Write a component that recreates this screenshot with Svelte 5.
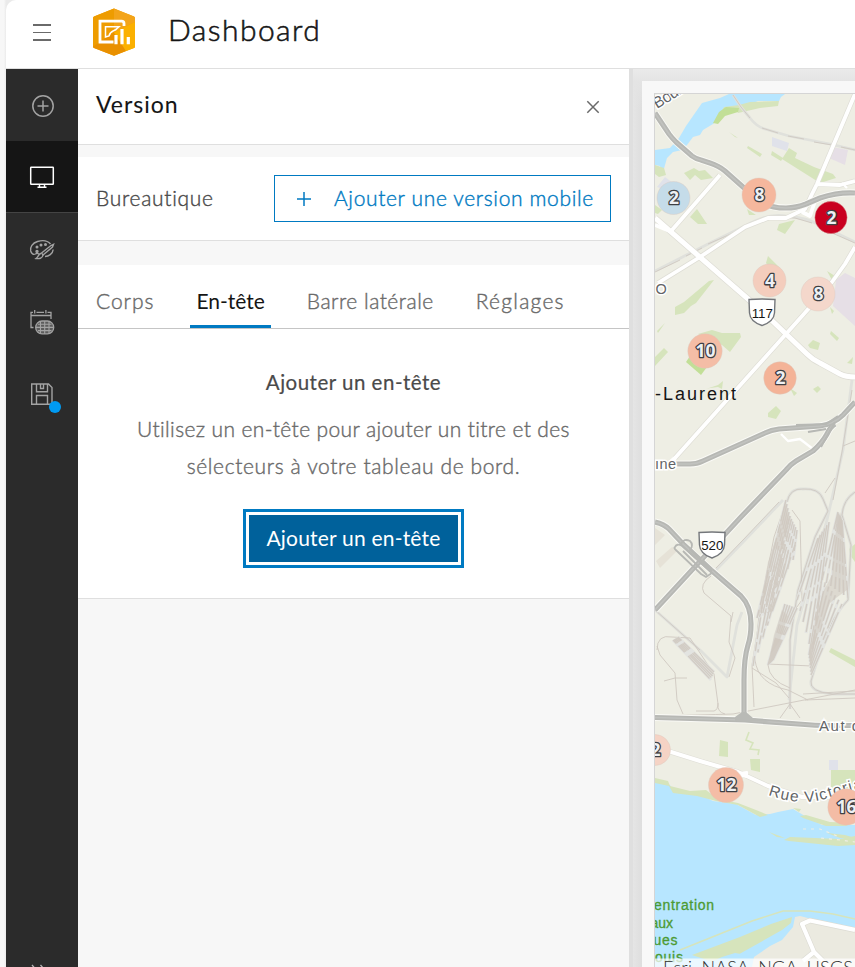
<script>
  const tabs = [
    { label: 'Corps', active: false, spacing: 0.95 },
    { label: 'En-tête', active: true, spacing: 0 },
    { label: 'Barre latérale', active: false, spacing: 0.5 },
    { label: 'Réglages', active: false, spacing: 1.25 }
  ];

  const clusters = [
    { x: 673.5, y: 198, r: 16, n: '2', fill: '#c5dce9' },
    { x: 759, y: 195, r: 16.5, n: '8', fill: '#f5b79d' },
    { x: 831, y: 217.5, r: 15.7, n: '2', fill: '#c9001f' },
    { x: 769.5, y: 280.5, r: 16, n: '4', fill: '#f4cdbd' },
    { x: 818, y: 294, r: 16.5, n: '8', fill: '#f4d7cb' },
    { x: 705, y: 351, r: 16.7, n: '10', fill: '#f4bda6' },
    { x: 780, y: 378, r: 15.8, n: '2', fill: '#f4b397' },
    { x: 655, y: 750, r: 15, n: '2', fill: '#f5d3c5' },
    { x: 726, y: 785, r: 17, n: '12', fill: '#f4bda6' },
    { x: 846, y: 807, r: 17.7, n: '16', fill: '#f4bca5' }
  ];

  // Fan of parallel sidings between two end lines of a rail yard
  function fan(ax, ay, bx, by, cx, cy, dx, dy, n) {
    let d = '';
    for (let i = 0; i <= n; i++) {
      const t = i / n;
      const x1 = ax + (bx - ax) * t;
      const y1 = ay + (by - ay) * t;
      const x2 = cx + (dx - cx) * t;
      const y2 = cy + (dy - cy) * t;
      d += `M${x1.toFixed(1)} ${y1.toFixed(1)}L${x2.toFixed(1)} ${y2.toFixed(1)}`;
    }
    return d;
  }

  const yards = [
    fan(786, 500, 791, 520, 757, 618, 770, 612, 5),
    fan(790, 516, 797, 530, 766, 605, 793, 560, 5),
    fan(768, 570, 795, 545, 753, 666, 772, 612, 4),
    fan(818, 538, 829, 522, 797, 600, 812, 655, 5),
    fan(838, 512, 842, 520, 822, 580, 848, 598, 6),
    fan(822, 578, 842, 604, 809, 655, 811, 675, 6),
    fan(785, 604, 797, 608, 768, 665, 773, 660, 5),
    fan(673, 640, 678, 637, 711, 680, 714, 672, 4)
  ];

  const motorways = [
    'M655 113L669 134Q672 138 676 142L692 156Q696 159 701 160L710 163Q719 166 725 171L743 187L757 199Q768 208 786 208Q796 208 806 204L820 198Q838 192 855 193',
    'M675 464H690Q697 464 703 461L765 433Q771 430 779 429L820 426Q834 424 843 415L855 402',
    'M835 424Q830 427 827 434Q822 443 813 451L796 461Q791 464 786 470L740 518L655 610',
    'M655 522Q664 524 669 529L684 545L711 570L741 596Q751 606 751 624Q751 636 748 645Q744 658 744 680V718',
    'M655 717.500L745 720L805 724.500Q815 725.500 825 725.500H855'
  ];
</script>

<div class="page">
  <header class="topbar">
    <button class="burger" aria-label="Menu">
      <span></span><span></span><span></span>
    </button>
    <svg class="logo" width="44" height="48" viewBox="0 0 44 48">
      <path d="M22 0.5L42 8.4Q43 9 43 10V38.5Q43 39.5 42 40L22 47.8L2 40Q1 39.5 1 38.5V10Q1 9 2 8.4Z" fill="#f3a000" />
      <path d="M22 0.5L2 8.4Q1 9 1 10V38.5L22 24.5Z" fill="#ee9c00" />
      <path d="M22 0.5L42 8.4Q43 9 43 10V14L22 24Z" fill="#f3a41a" />
      <path d="M1 38.5Q1 39.5 2 40L22 47.8L34 43L22 24.5Z" fill="#e99000" />
      <path d="M43 14V38.5Q43 39.5 42 40L34 43L22 24.5Z" fill="#fbb000" />
      <path d="M21.500 34H8V13.200H29.500Q32 13.200 32 15.500V18" fill="none" stroke="#fff" stroke-width="2.800" />
      <path d="M13.500 29V18.700H27L25 20.500Q24 22 21.500 22.700Q18 24 17 28L13.500 29Z" fill="none" stroke="#fff" stroke-width="1.500" />
      <path d="M24 27V36.300M30 21V36.300M36.300 29V36.300" stroke="#fff" stroke-width="3.200" />
    </svg>
    <h1>Dashboard</h1>
  </header>

  <div class="body">
    <nav class="rail">
      <button aria-label="Ajouter">
        <svg class="add" width="24" height="24" viewBox="0 0 24 24" fill="none" stroke="#a3a3a3" stroke-width="1.500">
          <circle cx="12" cy="12" r="10.200" /><path d="M12 6.500V17.500M6.500 12H17.500" />
        </svg>
      </button>
      <button class="on" aria-label="Version">
        <svg width="26" height="24" viewBox="0 0 26 24" fill="none" stroke="#fff">
          <rect x="1.700" y="1.200" width="22.600" height="17" rx=".5" stroke-width="1.500" />
          <path d="M10.500 18.500V21M15.500 18.500V21M8.500 21.300H17.500" stroke-width="1.400" />
        </svg>
      </button>
      <button aria-label="Thème">
        <svg width="26" height="24" viewBox="0 0 26 24" fill="none" stroke="#a3a3a3" stroke-width="1.400">
          <path d="M21.500 6C18.500 2.500 13 2.200 8.500 3.500C3.500 5 .8 9 1.700 13C2.500 15.800 4.500 17 6.300 16C8 15 9.200 15.200 10 16.500" />
          <circle cx="8" cy="13.500" r="1" fill="#a3a3a3" /><circle cx="8" cy="9" r=".8" /><circle cx="12" cy="7" r=".8" /><circle cx="16.500" cy="6.500" r=".8" />
          <path d="M12.500 15L22 7.500L24.500 6.300L23.500 9L14 17Z" />
          <path d="M12 15.500C9.500 15.500 9.800 18.500 7 20.500C10 21 13.500 20.500 14 17M16 18.500C19.500 18.200 23.800 16 24.200 11.500" />
        </svg>
      </button>
      <button aria-label="Fuseau horaire">
        <svg width="26" height="26" viewBox="0 0 26 26" fill="none" stroke="#a3a3a3" stroke-width="1.300">
          <path d="M4.500 18.500H2V3.300H4M7.500 3.300H15M18.500 3.300H22V10M2 6.500H22M5.700 1V4.500M16.900 1V4.500" />
          <rect x="6.700" y="12" width="18" height="12.800" rx="6.300" fill="#5c5c5c" />
          <path d="M7 18.400H24.500M9 15.200H22.500M9 21.600H22.500M15.700 12V25M11.500 12.500V24.500M20 12.500V24.500" stroke-width="1.100" />
        </svg>
      </button>
      <button class="save" aria-label="Enregistrer">
        <svg width="24" height="24" viewBox="0 0 24 24" fill="none" stroke="#a3a3a3" stroke-width="1.400">
          <path d="M1.700 2H18.500L22 5.500V22.300H1.700ZM6.500 2V9.700H17.500V2M10.500 2V6.500H13.500V2M6.500 22V13.500H17.500V22" />
        </svg>
        <i></i>
      </button>
      <div class="expand">
        <svg width="18" height="16" viewBox="0 0 18 16" fill="none" stroke="#b5b5b5" stroke-width="1.300">
          <path d="M2 1L8 8L2 15M10.500 1L16.500 8L10.500 15" />
        </svg>
      </div>
    </nav>

    <section class="panel">
      <div class="title-row">
        <h2>Version</h2>
        <svg width="14" height="14" viewBox="0 0 14 14" stroke="#6a6a6a" stroke-width="1.500"><path d="M1.300 1.300L12.700 12.700M12.700 1.300L1.300 12.700" /></svg>
      </div>
      <div class="version-row">
        <span class="lift">Bureautique</span>
        <button class="outline">
          <svg width="14" height="14" viewBox="0 0 14 14" stroke="#007ac2" stroke-width="1.500"><path d="M7 0V14M0 7H14" /></svg>
          <span class="lift">Ajouter une version mobile</span>
        </button>
      </div>
      <div class="card">
        <div class="tabs">
          {#each tabs as tab}
            <div class="tab" class:active={tab.active} style:letter-spacing="{tab.spacing}px">{tab.label}</div>
          {/each}
        </div>
        <div class="empty">
          <h3>Ajouter un en-tête</h3>
          <p>Utilisez un en-tête pour ajouter un titre et des<br /><span class="second">sélecteurs à votre tableau de bord.</span></p>
          <button class="primary">Ajouter un en-tête</button>
        </div>
      </div>
    </section>

    <main class="stage">
      <div class="sheet">
        <svg class="map" width="200" height="873" viewBox="655 94 200 873">
          <rect x="655" y="94" width="200" height="873" fill="#eeeee4" />
          <!-- northern river -->
          <path d="M729 94H785L781 97L779 101L758 101L748 105L738 108L728 112L719 118L713 124L703 130L700 135L693 137L687 145L682 150L673 152L667 158L665 165L662 176L660 166L655 165V150L670 148L679 138L686 126L702 103L720 98Z" fill="#b7e6ff" />
          <path d="M735 108L724 114L719 119L713 124L719 116L724 107L739 105L750 102L779 101L778 106L760 108L738 113Z" fill="#d6e4bc" />
          <path d="M719 112L726 107L739 108L738 112L725 116L718 124L713 123Z" fill="#c2df97" />
          <g fill="#d6e4bc">
            <path d="M729 132L738 138L735 137ZM748 146L762 154L760 157L747 148ZM772 151L783 158L781 161L771 155ZM789 148L797 153L795 158L814 167L833 174L836 178L820 183L782 159Z" />
            <path d="M684 173L694 168L699 171L705 170L713 178L701 180L695 175L690 180ZM697 209L707 224L698 224L690 217ZM747 209L756 215L749 215ZM779 224L795 220L785 234L777 230Z" />
            <path d="M655 165L664 168L666 175L659 177L655 174ZM655 205L662 210L658 214L655 213ZM768 256L780 268L776 276L766 263ZM709 281L714 280L696 303L691 306L684 313L675 315L675 307L684 302ZM657 331L673 315L665 323L658 333ZM655 357L664 348L668 352L655 366Z" />
            <path d="M698 334L712 330L722 333H740L741 337L730 352L722 345ZM706 389L718 385L723 381L722 389L718 387L710 388ZM768 413L776 406L781 411L776 419L768 417ZM808 345L813 340L820 343L818 350L810 348ZM831 331L839 338L837 341L830 334ZM813 389L818 386L821 389L817 393ZM847 363L853 357L852 364ZM827 271L835 276L832 280ZM790 388L797 393L794 396ZM830 307L834 311L832 314Z" />
            <path d="M720 740L728 742L728 757L719 756ZM750 759H760V772L751 770ZM831 770H855V788H831ZM831 648L855 660V667L829 652ZM849 549L855 544V562L850 555Z" />
          </g>
          <path d="M686 362L692 353L707 367L701 375Z" fill="#c2df97" />
          <g fill="#e0e2ea"><path d="M772 137L789 143L787 151L772 146ZM657 187L665 177L673 183L666 190ZM829 760H838V770H829Z" /></g>
          <path d="M832 147L848 150L845 165L829 158ZM836 280L845 273L855 278V326L833 306Z" fill="#e6dfe6" />
          <path d="M655 545L665 535L655 528ZM656 561L672 547L678 550L660 568Z" fill="#e6e2d7" />

          <!-- southern river -->
          <path d="M655 782L670 785L673 791L697 793L713 801L736 804L756 815L770 814L778 812L793 809L805 816L822 825H855V967H655Z" fill="#b7e6ff" />
          <path d="M655 778L668 781L670 786L690 791L706 790L718 799L738 803L756 810L768 815L760 817L738 805L716 801L697 796L673 793L669 786L655 783ZM800 816L806 815L830 822L855 823L845 826L826 826L803 818ZM793 808L801 809L799 812ZM784 840L790 837L840 839L855 836V845L838 846L789 841ZM769 832L785 838L777 837ZM827 833L845 835L855 838L840 838Z" fill="#d6e4bc" />
          <path d="M803 829L820 829L837 836M821 838L840 840L855 842" fill="none" stroke="#eeeee4" stroke-width="1.200" stroke-dasharray="3 5" />
          <path d="M795 917L800 916L855 930V967H752L754 957L770 946L782 940L793 927Z" fill="#ebeae0" />
          <path d="M692 955L740 937L771 924L792 917L791 923L782 930L734 957L731 960L713 962Z" fill="#d6e4bc" />
          <path d="M680 950L752 921L783 911L810 911L833 914L855 919" fill="none" stroke="#d6e4bc" stroke-width="1.600" />
          <path d="M701 967L722 957L735 953L747 955L744 967Z" fill="#b7e6ff" />
          <path d="M855 930L810 920.500L802 924L814 952L803 961M814 952L829 967" fill="none" stroke="#dddcd4" stroke-width="5.500" stroke-linejoin="round" />
          <path d="M855 930L810 920.500L802 924L814 952L803 961M814 952L829 967" fill="none" stroke="#fff" stroke-width="4.200" stroke-linejoin="round" />
          <path d="M749 732L746 740L753 743L750 749L759 750L758 755" fill="none" stroke="#d6e4bc" stroke-width="1.600" />

          <!-- rail lines -->
          <g fill="none" stroke="#e0e1dc" stroke-width="2.800" stroke-linejoin="round">
            <path d="M733 95L741 107L750 118Q757 127 765 129L789 136L830 144L855 150M655 271L712 242L745 226Q768 213 785 216Q805 217 822 226L855 242M852 380L843 450L827 520L797 625L789 700" />
            <path d="M716 570L745 540L783 500M655 610L700 650L727 677L737 625L742 612" />
            <path d="M787 502Q790 488 803 489Q819 488 823 499L828 511L815 537L798 590L790 640V709M855 492Q843 500 842 515L851 545L848 600Q833 615 822 645L811 681Q809 692 833 694H855" />
          </g>
          <g fill="none" stroke="#cfc8c1" stroke-width=".9">
            <path d="M733 95L741 107L750 118M762 128L778 133M788 136L804 139M814 142L832 145M841 147L855 150M655 272L680 260M686 256L702 248M708 244L733 233M738 230L758 222M769 217L795 218L812 223M823 229L855 243" />
            <path d="M787 502Q790 488 803 489Q819 488 823 499L828 511L815 537L798 590L790 640V709M825 493L835 478M855 492Q843 500 842 515L851 545L848 600Q833 615 822 645L811 681Q809 692 833 694H855M785 505L774 537L759 614L755 660Q758 684 788 690L808 700M752 668L776 683L789 698M792 510L800 521L802 600Q785 620 768 665Q769 680 790 688M760 615L752 665L754 707M767 664L812 666" />
            <path d="M655 610L700 650M657 650Q657 634 672 637L690 638L714 674L718 704Q717 712 725 714M657 646L660 655L675 673L677 700L683 714M664 681L675 678L687 678M716 568L743 540L779 502M711 576Q699 584 704 593L731 616L729 642L735 658L729 677M731 622L733 612" />
            <path d="M852 390L842 452L833 500M843 446L855 441M655 716Q700 715 733 714L855 690M805 700L855 698M803 694L855 691M696 711H714Q718 710 718 703M790 704L780 718M790 704L800 718" />
          </g>
          {#each yards as d}
            <path {d} fill="none" stroke="#e3e4e1" stroke-width="3" />
          {/each}
          {#each yards as d, i}
            <path {d} fill="none" stroke="#d2ccc4" stroke-width="1.400" stroke-dasharray="22 3 9 5 31 4" stroke-dashoffset={i * 13} />
          {/each}
          <path d="M785 502L789 520L781 552L775 548L762 610L758 616L768 562L777 535ZM841 512L843 538L847 590L836 598L830 603L812 650L815 620L824 590L832 575L834 540ZM782 610L788 616L780 640L770 655L774 635Z" fill="#cfc8bf" opacity=".55" />

          <!-- local streets -->
          <g fill="none" stroke="#dfded6" stroke-linejoin="round">
            <path d="M655 218L701 258L763 312L807 354Q813 360 820 363L840 374Q846 377 855 377" stroke-width="6.500" />
            <path d="M672 230L720 175M658 283L700 257L745 227L768 218H786L805 209L812 194L817 184L855 94M817 184L840 185L855 181M855 247L845 264L832 282L803 315L675 458M655 747L700 761L738 772L768 786L802 797L855 797" stroke-width="5.200" />
          </g>
          <g fill="none" stroke="#fff" stroke-linejoin="round">
            <path d="M655 218L701 258L763 312L807 354Q813 360 820 363L840 374Q846 377 855 377" stroke-width="5" />
            <path d="M672 230L720 175M658 283L700 257L745 227L768 218H786L805 209L812 194L817 184L855 94M817 184L840 185L855 181M655 225L672 232M802 212L810 216L815 201M855 247L845 264L832 282L803 315L675 458L668 464" stroke-width="3.800" />
            <path d="M842 183L847 188M781 434L788 441L800 439L813 449" stroke-width="2.300" />
            <path d="M655 747L700 761L738 772L768 786L802 797L855 797" stroke-width="4" />
            <path d="M733 774L747 772V777Z" stroke-width="2" fill="#fff" />
          </g>

          <!-- motorways -->
          {#each motorways as d}
            <path {d} fill="none" stroke="#fafaf6" stroke-width="7" />
          {/each}
          {#each motorways as d}
            <path {d} fill="none" stroke="#b7b8b4" stroke-width="5.200" />
          {/each}
          {#each motorways as d}
            <path {d} fill="none" stroke="#c1c2bf" stroke-width="1.600" />
          {/each}
          <path d="M796 425L826 424L838 416M808 432L826 429M835 422L821 447" fill="none" stroke="#b7b8b4" stroke-width="2" />
          <path d="M735 717L742 712L746 712L753 718L770 722L735 721Z" fill="#b9bab6" />
          <path d="M681 544Q684 538 690 541Q694 545 690 550L712 571M675 547Q677 543 682 546L712 573L706 577L701 574L678 552Q673 548 675 547ZM683 551L707 575" fill="none" stroke="#b7b8b4" stroke-width="1.800" />

          <!-- road shields -->
          <g fill="#fff" stroke="#74777b" stroke-width="1.400">
            <path d="M749 299.500Q762 298.500 775 299.500L774.500 313C774 320 768 323.500 762 325.500C756 323.500 750 320 749.500 313Z" />
            <path d="M699 532.500Q712 531.500 725 532.500L724.500 545C724 553 718 556 712 558C706 556 700 553 699.500 545Z" />
          </g>
          <g class="shield"><text x="762.300" y="317.500">117</text><text x="712.300" y="550">520</text></g>

          <!-- place names -->
          <text class="street" transform="translate(657 109) rotate(-32)" font-size="16" textLength="38">Boule</text>
          <text class="street" x="655.500" y="293.500" font-size="14.500">O</text>
          <text class="city" x="655" y="400" textLength="81">-Laurent</text>
          <text class="street" x="655" y="468.500" font-size="14.500" textLength="21">ıne</text>
          <text class="street" x="819" y="731" font-size="15" textLength="51">Aut de</text>
          <path id="victoria" d="M768 795C785 801 804 805 825 799C840 795 849 791 870 787" fill="none" />
          <text class="street" font-size="15.500" letter-spacing="1.200"><textPath href="#victoria">Rue Victoria</textPath></text>
          <g class="park">
            <text x="654" y="910" textLength="60">entration</text>
            <text x="673" y="928" text-anchor="end">aux</text>
            <text x="653.500" y="945" textLength="24">ues</text>
            <text x="655" y="961.500" textLength="28">ouis</text>
          </g>

          {#each clusters as c}
            <circle cx={c.x} cy={c.y} r={c.r + 0.5} fill={c.fill} stroke="#ddc8bd" stroke-opacity=".5" stroke-width=".8" />
            <text class="count" x={c.x + 0.5} y={c.y + 6}>{c.n}</text>
          {/each}

          <rect x="655" y="958.500" width="200" height="9" fill="#fff" fill-opacity=".72" />
          <text class="credit" x="663" y="974" textLength="190">Esri, NASA, NGA, USGS</text>
        </svg>
      </div>
    </main>
  </div>
</div>

<style>
  :global(body) { margin: 0; background: #f7f7f7; overflow: hidden; }
  .page {
    box-sizing: border-box;
    width: 855px;
    height: 967px;
    padding-left: 6px;
    display: flex;
    flex-direction: column;
    overflow: hidden;
    background: linear-gradient(90deg, #f7f7f7 4px, #eaeaea 6px);
    font-family: Lato, "Open Sans", sans-serif;
    font-weight: 300;
    -webkit-text-stroke: .4px;
    color: #151515;
  }
  h1, h2, h3, p { margin: 0; font-weight: 300; }
  button { margin: 0; padding: 0; border: 0; background: none; font: inherit; color: inherit; letter-spacing: inherit; }
  svg { display: block; }

  .topbar {
    flex: none;
    box-sizing: border-box;
    height: 69px;
    display: flex;
    align-items: center;
    padding: 0 0 6px 27px;
    background: #fff;
    border-bottom: 1px solid #dfdfdf;
    border-top-left-radius: 10px;
  }
  .burger { width: 18px; display: flex; flex-direction: column; gap: 6px; margin-top: 3px; }
  .burger span { height: 1.500px; background: #6a6a6a; }
  .logo { margin-left: 41px; margin-top: 2px; }
  h1 { margin-left: 32px; font-size: 30px; letter-spacing: 1.450px; line-height: 40px; padding-bottom: 4px; -webkit-text-stroke: .55px; }

  .body { flex: 1; min-height: 0; display: flex; }
  .rail { width: 72px; flex: none; display: flex; flex-direction: column; background: #2b2b2b; }
  .rail button {
    box-sizing: border-box;
    position: relative;
    height: 72px;
    flex: none;
    display: flex;
    align-items: center;
    justify-content: center;
    padding-top: 2px;
  }
  .add { margin-left: 1px; }
  .rail .on { background: #151515; border-bottom: 1px solid #444; }
  .save i { position: absolute; left: 43px; top: 44px; width: 12px; height: 12px; border-radius: 50%; background: #009af2; }
  .expand { margin-top: auto; height: 3px; padding-left: 24px; overflow: hidden; }

  .panel { width: 551px; flex: none; background: #f7f7f7; }
  .title-row, .version-row {
    box-sizing: border-box;
    display: flex;
    align-items: center;
    justify-content: space-between;
    background: #fff;
    border-bottom: 1px solid #dfdfdf;
  }
  .title-row { height: 76px; padding: 0 29px 0 18px; }
  h2 { font-size: 23px; letter-spacing: 1px; font-weight: 400; -webkit-text-stroke: .1px; padding-bottom: 5px; }
  .version-row { margin-top: 12px; height: 84px; padding: 0 18px; color: #4a4a4a; font-size: 21px; letter-spacing: .7px; }
  .lift { padding-bottom: 3px; }
  .outline {
    box-sizing: border-box;
    width: 337px;
    height: 47px;
    border: 1px solid #007ac2;
    color: #007ac2;
    display: flex;
    align-items: center;
    padding-left: 22px;
    gap: 23px;
    white-space: nowrap;
    letter-spacing: .64px;
  }
  .card { margin-top: 24px; height: 334px; box-sizing: border-box; background: #fff; border-bottom: 1px solid #dfdfdf; }
  .tabs {
    box-sizing: border-box;
    height: 64px;
    display: flex;
    gap: 30px;
    padding-left: 12px;
    border-bottom: 1px solid #c5c5c5;
    font-size: 21px;
    color: #6a6a6a;
    white-space: nowrap;
  }
  .tab { box-sizing: border-box; height: 63px; padding: 11px 6px 0; line-height: 50px; border-bottom: 3px solid transparent; }
  .tab.active { color: #151515; border-color: #007ac2; font-weight: 400; -webkit-text-stroke: 0; }
  .empty { display: flex; flex-direction: column; align-items: center; padding-top: 35px; text-align: center; }
  h3 { font-size: 20.500px; line-height: 37px; color: #4a4a4a; font-weight: 400; -webkit-text-stroke: .2px; letter-spacing: .5px; }
  p { font-size: 21px; line-height: 37px; margin-top: 9px; color: #6a6a6a; letter-spacing: .37px; white-space: nowrap; }
  .second { letter-spacing: .63px; }
  .primary {
    width: 209px;
    height: 47px;
    margin-top: 31px;
    padding-bottom: 2px;
    background: #00619b;
    color: #fff;
    font-size: 21px;
    font-weight: 400;
    -webkit-text-stroke: 0;
    letter-spacing: .2px;
    outline: 3px solid #007ac2;
    outline-offset: 3px;
    white-space: nowrap;
  }

  .stage {
    flex: 1;
    min-width: 0;
    padding: 12px 0 0 9px;
    border-left: 4px solid #dfdfdf;
    background: linear-gradient(180deg, #eaeaea, #e4e4e4 12px, transparent 40px), linear-gradient(90deg, #e5e5e5, #dedede 9px);
  }
  .sheet { padding: 12px 0 0 12px; background: #f8f8f8; }
  .map { border: 1px solid #d5d5d5; border-width: 1px 0 0 1px; font-family: "Liberation Sans", Arial, sans-serif; font-weight: 400; -webkit-text-stroke: 0; }
  .count {
    font: 700 17.500px "Noto Sans", "Open Sans", sans-serif;
    text-anchor: middle;
    fill: #eef0f4;
    stroke: #3e4044;
    stroke-width: 2.600px;
    stroke-linejoin: round;
    paint-order: stroke;
  }
  .shield { font-size: 13.300px; text-anchor: middle; fill: #151515; }
  .street { fill: #626466; stroke: #fff; stroke-width: 3px; paint-order: stroke; }
  .city { font-size: 18px; fill: #151515; }
  .park { font-size: 14px; fill: #4c9a32; stroke: #4c9a32; stroke-width: .3px; }
  .credit { font: 300 18px Lato, sans-serif; fill: #323232; }
</style>
